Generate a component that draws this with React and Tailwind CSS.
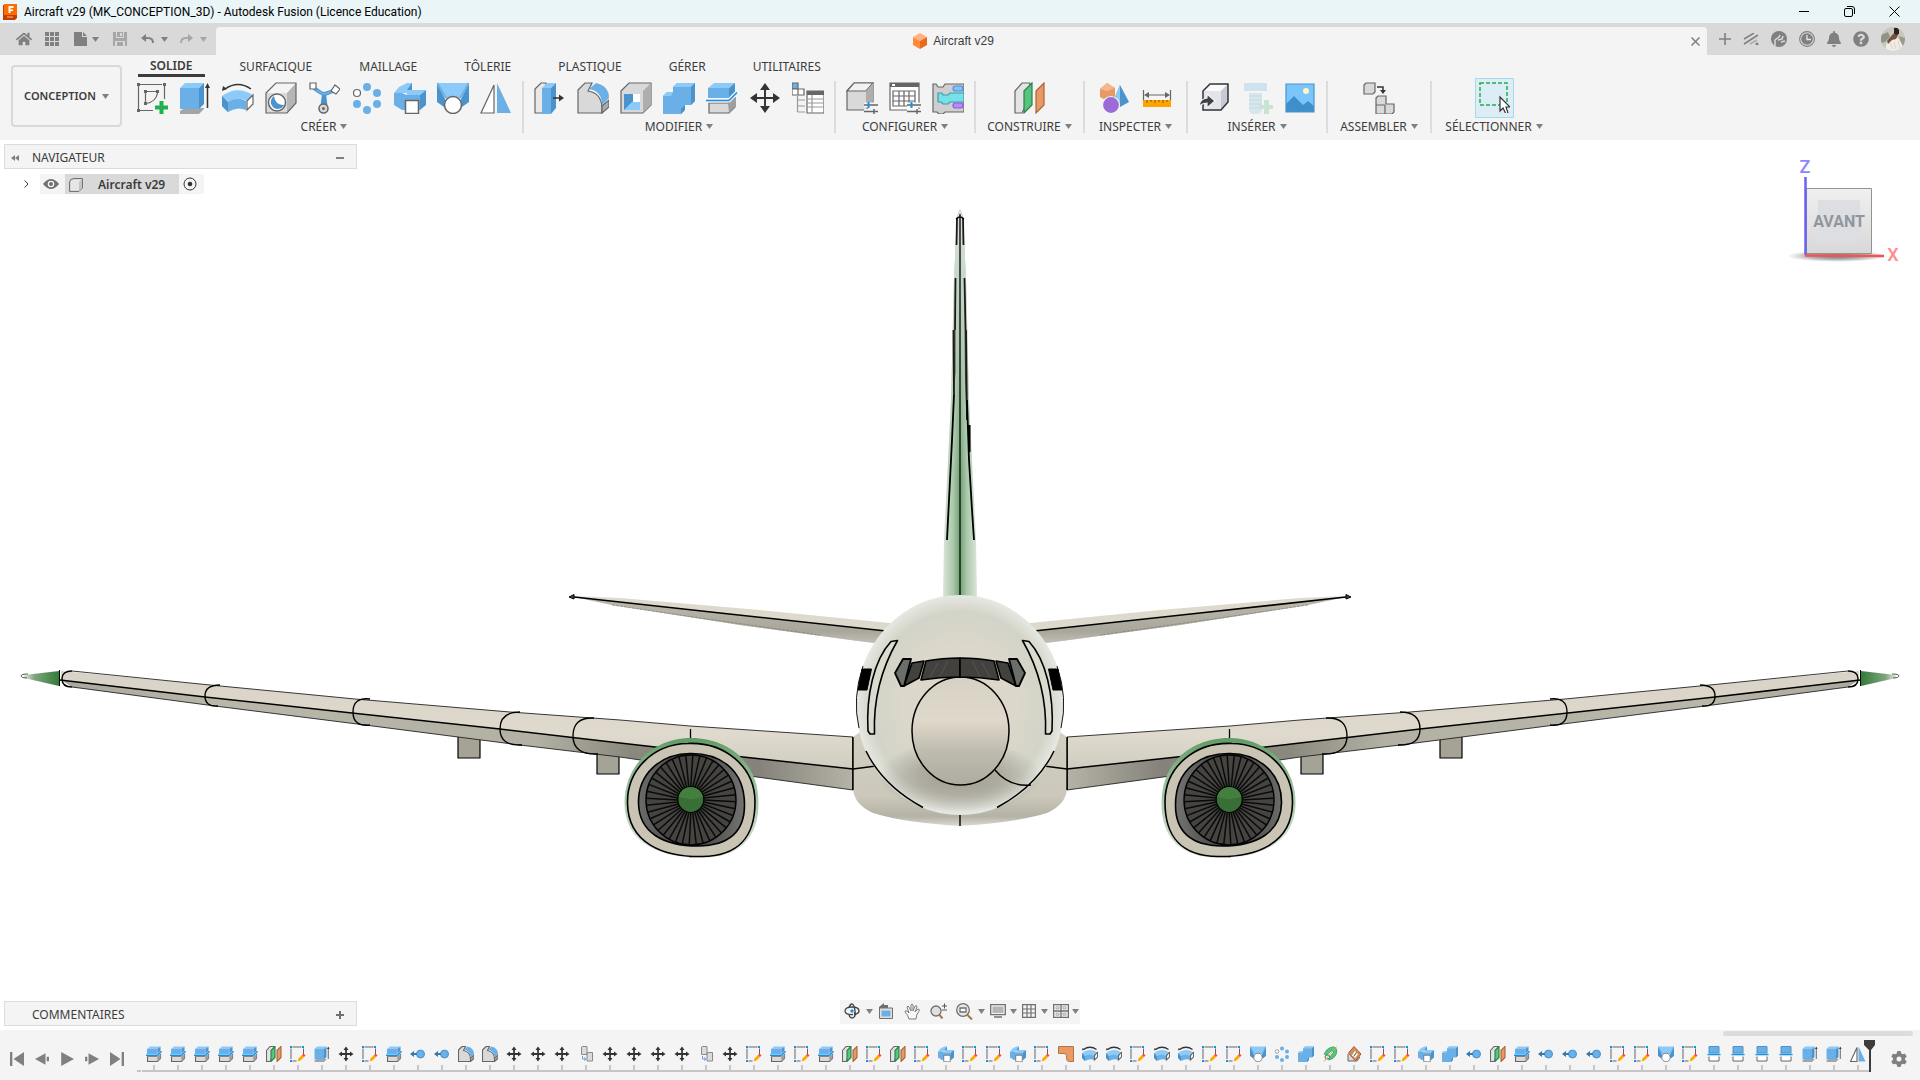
import { FaHome, FaBell, FaQuestionCircle } from "react-icons/fa";
import { FaGear } from "react-icons/fa6";

const LINE = "#666666";
const GREY = "#d9d9d9";
const BLUE = "#6ab0e6";
const SKY = "#8ccaf9";
const DEEP = "#4a93cc";

/* ---------- tool icons, all drawn on a 32 x 32 grid ---------- */

const glyphs = {
  newSketch: () => (
    <>
      <path d="M4 2.500h22M2.500 4v24M28.500 4v13M4 28.500h13" stroke={LINE} fill="none" />
      <path d="M10 9.500h10M9.500 10v10M10 21.500Q20 20 21.500 11" stroke={LINE} fill="none" />
      <path d="M1 1h3v3H1zM27 1h3v3h-3zM1 27h3v3H1zM8 8h3v3H8zM20 8h3v3h-3zM8 20h3v3H8z" fill={LINE} />
      <path d="M23.500 19h4v4.500H32v4h-4.500V32h-4v-4.500H19v-4h4.500z" fill="#21b04f" />
    </>
  ),
  extrude: () => (
    <>
      <path d="M1 29l5-3h19v1l-5 5H1z" fill="#a5a5a5" />
      <path d="M1 6l5-5h19l-5 5z" fill={SKY} />
      <path d="M1 6h19v21H1z" fill={BLUE} />
      <path d="M20 6l5-5v21l-5 5z" fill={DEEP} />
      <path d="M28.500 4v22" stroke="#333" strokeWidth="1.500" />
      <path d="M26 6l2.500-5L31 6z" fill="#333" />
    </>
  ),
  bend: ({ sw }) => (
    <>
      <path d="M3 7Q16-2 29 7" stroke="#333" strokeWidth={sw * 1.2} fill="none" />
      <path d="M0 9l1-5 4 3z" fill="#333" />
      <path d="M0 14Q15 3 31 13l-6 6Q15 14 7 20z" fill={SKY} />
      <path d="M0 14l6 6Q15 14 24 19v9Q15 24 6 30L0 24z" fill={BLUE} />
      <path d="M0 14l6 6v10l-6-6z" fill={DEEP} />
      <path d="M25 19l6-6v9l-6 6z" fill="#fff" stroke={LINE} strokeWidth={sw} />
    </>
  ),
  hole: () => (
    <>
      <path d="M1 11L11 1h20L22 11z" fill="#f4f4f4" />
      <path d="M22 11l9-10v20L22 31z" fill="#b5b5b5" />
      <path d="M1 11h21v20H1z" fill={GREY} />
      <path d="M1 11L11 1h20v20L22 31H1z" fill="none" stroke={LINE} />
      <circle cx="12" cy="20.500" r="8.500" fill="#fff" stroke={LINE} strokeWidth="1.500" />
      <path d="M9 14a7 7 0 1 0 10 9Q10 23 9 14z" fill={DEEP} />
    </>
  ),
  form: () => (
    <>
      <path d="M6 6Q14 12 16 12T27 8M16 12L14 28M16 12L18 28" stroke={DEEP} strokeWidth="4" fill="none" />
      <path d="M6 6Q14 12 16 12T27 8" stroke={BLUE} strokeWidth="2" fill="none" />
      <circle cx="15.500" cy="26.500" r="4.500" fill={GREY} stroke={LINE} strokeWidth="1.500" />
      <circle cx="15.500" cy="26.500" r="1.500" fill={LINE} />
      <path d="M2 1h6v6H2zM27 3l5 4-4 5-5-3z" fill="#fff" stroke={LINE} />
    </>
  ),
  pattern: () => (
    <>
      <circle cx="16" cy="5" r="4" fill={BLUE} />
      <circle cx="26" cy="11" r="4" fill={BLUE} />
      <circle cx="26" cy="22" r="4" fill={BLUE} />
      <circle cx="16" cy="28" r="4" fill={BLUE} />
      <circle cx="6" cy="22" r="4" fill={BLUE} />
      <circle cx="6" cy="11" r="3.500" fill="#fff" stroke={LINE} />
    </>
  ),
  combine: () => (
    <>
      <path d="M0 11L5 5l8-4h5v7h14l-6 5H13v-2z" fill={SKY} />
      <path d="M0 11h8l5 2h13v15H8L0 23z" fill={BLUE} />
      <path d="M13 8l5-7v7zM26 13l6-5v15l-6 5z" fill={DEEP} />
      <path d="M11.500 18.500h13v13h-13z" fill="#fff" stroke={LINE} strokeWidth="1.500" />
    </>
  ),
  loft: () => (
    <>
      <path d="M0 1h32L23 16H9z" fill={SKY} />
      <path d="M0 1l9 18-2 6-7-5z" fill={DEEP} />
      <path d="M32 1l-9 18 2 6 7-5z" fill={DEEP} />
      <path d="M0 1l9 15M32 1l-9 15" stroke={BLUE} strokeWidth="2" />
      <circle cx="16" cy="23" r="8.500" fill="#fff" stroke={LINE} strokeWidth="1.500" />
    </>
  ),
  mirror: ({ sw }) => (
    <>
      <path d="M14 3v28H1z" fill="#fff" stroke={LINE} strokeWidth={sw} />
      <path d="M17 1l14 30H17z" fill={BLUE} />
    </>
  ),
  press: () => (
    <>
      <path d="M1 7l6-6h5v30H1z" fill="#e8e8e8" stroke={LINE} />
      <path d="M8 6l5-5h9l-5 5z" fill={SKY} />
      <path d="M8 6h9v26H8z" fill={BLUE} />
      <path d="M17 6l5-5v25l-5 6z" fill={DEEP} />
      <path d="M19 16h7" stroke="#333" strokeWidth="1.500" />
      <path d="M25 12.500l5 3.500-5 3.500z" fill="#333" />
    </>
  ),
  fillet: ({ sw }) => (
    <>
      <path d="M1 8l7-7h7l-4 8Q24 11 25 25v6H1z" fill={GREY} stroke={LINE} strokeWidth={sw} />
      <path d="M25 24l7-6v7l-7 6z" fill="#aaa" stroke={LINE} strokeWidth={sw} />
      <path d="M12 7l7-6Q32 4 32 16l-7 7Q25 9 12 7z" fill={BLUE} />
    </>
  ),
  shell: () => (
    <>
      <path d="M1 9l8-8h22v22l-8 8H1z" fill={GREY} stroke={LINE} />
      <path d="M23 9l8-8v22l-8 8z" fill="#aeaeae" />
      <path d="M4 12h16v16H4z" fill="#fff" />
      <path d="M4 12h9v8l-7 8H4z" fill={DEEP} />
      <path d="M12 20h8v8H4z" fill={SKY} />
    </>
  ),
  join: () => (
    <>
      <path d="M0 14l4-4h6V5l4-4h18v18l-4 4h-6v5l-4 4H0z" fill={BLUE} />
      <path d="M0 14l4-4h6l-2 4zM10 5l4-4h18l-4 4z" fill={SKY} />
      <path d="M28 5l4-4v18l-4 4zM18 27l4-4v5l-4 4z" fill={DEEP} />
    </>
  ),
  split: ({ sw }) => (
    <>
      <path d="M3 21h19l7-5v9l-6 6H3z" fill={GREY} stroke={LINE} strokeWidth={sw} />
      <path d="M22 21l7-5v9l-6 6z" fill="#9f9f9f" />
      <path d="M2 6l6-5h21l-6 5z" fill={SKY} />
      <path d="M2 6h21v10H2z" fill={BLUE} />
      <path d="M23 6l6-5v9l-6 6z" fill={DEEP} />
      <path d="M0 18.500h23l8-8" fill="none" stroke="#f4f4f4" strokeWidth="4" />
      <path d="M0 18.500h23l8-8" fill="none" stroke="#168fe6" strokeWidth={sw * 1.3} />
    </>
  ),
  move: ({ sw }) => (
    <>
      <path d="M16 5v22M5 16h22" stroke="#333" strokeWidth={sw * 1.6} />
      <path d="M11 8l5-7 5 7zM11 24l5 7 5-7zM8 11l-7 5 7 5zM24 11l7 5-7 5z" fill="#333" />
    </>
  ),
  params: () => (
    <>
      <path d="M0 1h6v6H0z" fill={BLUE} stroke={LINE} />
      <path d="M0 7h6v6H0zM6 7h6v6H6z" fill="#fff" stroke={LINE} />
      <path d="M5.500 14v16M5.500 18H13M5.500 24H13M5.500 30H13" stroke="#999" />
      <path d="M15 9h17v22H15z" fill="#fff" stroke={LINE} />
      <path d="M15 9h17v4H15z" fill={LINE} />
      <path d="M15 17h17M15 21h17M15 25h17M20 13v18" stroke="#999" />
    </>
  ),
  config: () => (
    <>
      <path d="M1 9l7-8h19v19l-7 8H1z" fill={GREY} stroke={LINE} />
      <path d="M1 9l7-8h19l-7 8z" fill="#f2f2f2" stroke={LINE} />
      <path d="M20 9l7-8v19l-7 8z" fill="#aeaeae" />
      <path d="M18 23h14M18 29.500h14" stroke="#f4f4f4" strokeWidth="5" />
      <path d="M18 23h14M18 29.500h14M28 27v5" stroke={LINE} strokeWidth="1.500" />
      <path d="M22.500 20v6" stroke="#168fe6" strokeWidth="2" />
    </>
  ),
  configTable: () => (
    <>
      <path d="M1 1h29v27H1z" fill="#fff" stroke={LINE} />
      <path d="M1 1h29v4H1z" fill={LINE} />
      <path d="M3 2h3v2H3z" fill="#fff" />
      <path d="M4 9h22v15H4zM4 14h22M4 19h22M10 9v15M15 9v15M20 9v15" fill="none" stroke={LINE} />
      <path d="M18 23h14M18 29.500h14" stroke="#f4f4f4" strokeWidth="5" />
      <path d="M18 23h14M18 29.500h14M28 27v5" stroke={LINE} strokeWidth="1.500" />
      <path d="M22.500 20v6" stroke="#168fe6" strokeWidth="2" />
    </>
  ),
  configRule: () => (
    <>
      <path d="M1 2h3l2 3h5l2-3h19v28H13l-2 2H7l-2-2H1z" fill="#cfcfcf" stroke={LINE} />
      <path d="M6 11h4l1 2h5l2-2h14v9H18l-2 2h-5l-2-2H6z" fill="#78e0ea" stroke="#3a9fa8" />
      <rect x="21" y="4" width="10" height="5" rx="2.500" fill="#7cc3ff" stroke="#4a93cc" />
      <rect x="21" y="21" width="10" height="5" rx="2.500" fill="#b98aff" stroke="#8a5fd0" />
    </>
  ),
  plane: ({ sw }) => (
    <>
      <path d="M1 9l7-8h8v14l-8 16H1z" fill="#e4e4e4" stroke={LINE} strokeWidth={sw} />
      <path d="M10 9l8-8v22l-8 8z" fill="#56c57c" stroke="#2e7f4c" strokeWidth={sw} />
      <path d="M22 9l8-8v22l-8 8z" fill="#e79a66" stroke="#a9653a" strokeWidth={sw} />
    </>
  ),
  inspect: () => (
    <>
      <path d="M2 7l7-6 8 5v9l-8 4-7-4z" fill="#e79a66" />
      <path d="M2 7l7-6 8 5-8 3z" fill="#f6b78d" />
      <path d="M22 3l9 17-9 5-7-5z" fill={DEEP} />
      <path d="M22 3v22l-7-5z" fill={SKY} />
      <circle cx="13" cy="23" r="8.500" fill="#9b6bd8" stroke="#f4f4f4" />
    </>
  ),
  measure: () => (
    <>
      <path d="M2.500 8v12M29.500 8v12M5 13h22" stroke={LINE} />
      <path d="M3 13l5-3v6zM29 13l-5-3v6z" fill={LINE} />
      <path d="M2 18h28v7H2z" fill="#ffa500" />
      <path d="M6 18v3M10 18v2M14 18v3M18 18v2M22 18v3M26 18v2" stroke="#9a6100" />
    </>
  ),
  insert: () => (
    <>
      <path d="M5 9l7-7h18v18l-7 8H5z" fill="#e3e3e9" />
      <path d="M5 9l7-7h18l-7 7z" fill="#fafafa" />
      <path d="M23 9l7-7v18l-7 8z" fill="#c6cad4" />
      <path d="M5 9l7-7h18v18l-7 8H5z" fill="none" stroke="#333" strokeWidth="1.500" />
      <path d="M1 24Q2 17 9 16v-4l8 7-8 7v-5q-4 0-8 3z" fill="#3d4148" stroke="#f4f4f4" />
    </>
  ),
  bolt: () => (
    <g opacity="0.800">
      <path d="M3 1h23v8H3z" fill="#c6e0ef" />
      <path d="M8 11h13v18l-3 3h-7l-3-3z" fill="#d2e4ee" />
      <path d="M8 14h13M8 18h13M8 22h13M8 26h13" stroke="#b5cfdc" />
      <path d="M23 18h5v5h5v4h-5v5h-5v-5h-5v-4h5z" fill="#bfe2ca" />
    </g>
  ),
  image: () => (
    <>
      <path d="M2 2h28v28H2z" fill="#7cc5fb" />
      <path d="M2 22l8-8 9 9 5-4 6 5v6H2z" fill="#3d90cb" />
      <path d="M2 2h28v28H2z" fill="none" stroke={DEEP} />
      <circle cx="22" cy="9" r="3" fill="#fff6c8" />
    </>
  ),
  assemble: () => (
    <>
      <path d="M1 3l2-2h9v9l-2 2H1zM13 16l2-2h8v8h8v8l-2 2H13zM13 23h9M22 32v-9" fill={GREY} stroke={LINE} />
      <path d="M14 5h6v4" stroke="#333" strokeWidth="1.500" fill="none" />
      <path d="M17 8h6l-3 4z" fill="#333" />
    </>
  ),
  select: () => (
    <>
      <path d="M2 2h27v22H2z" fill="none" stroke="#21b04f" strokeWidth="1.500" strokeDasharray="4 2" />
      <path d="M22 16v14l3-3 3 6 2-1-2-6h4z" fill="#fff" stroke="#333" strokeWidth="1.200" />
    </>
  ),
  sketch: () => (
    <>
      <path d="M5 2h18M2 5v21M27 5v13M5 30h8" stroke={LINE} strokeWidth="2" fill="none" />
      <path d="M0 0h4v4H0zM24 0h4v4h-4zM0 28h4v4H0z" fill="#168fe6" />
      <path d="M15 31l2-6 7-7 4 4-7 7z" fill="#ffa800" />
      <path d="M24 18l3-3 4 4-3 3z" fill="#ff3f3f" />
    </>
  ),
  point: () => (
    <>
      <circle cx="21" cy="16" r="8" fill={BLUE} stroke={DEEP} strokeWidth="2" />
      <path d="M0 16l8-6v12z" fill="#3778a8" />
      <path d="M6 16h8" stroke="#3778a8" strokeWidth="4" />
    </>
  ),
  copy: () => (
    <>
      <path d="M7 2l2-1h9v16h-2H7zM18 14l2-1h9v17H18z" fill="#dcdcdc" stroke="#8a8a8a" strokeWidth="2" />
      <path d="M9 20v6h6M12 23l4 3-4 3" stroke="#6f9fe0" strokeWidth="2" fill="none" />
    </>
  ),
  flange: () => <path d="M1 1h30v30h-8q-6 0-6-6v-6q0-4-5-4H1z" fill="#e79a66" stroke="#b9713f" strokeWidth="2" />,
  coil: () => (
    <>
      <path d="M7 18Q12 7 22 5q7 2 3 11-5 8-12 9" fill="none" stroke="#2e9a5a" strokeWidth="8" />
      <path d="M7 18Q12 7 22 5q7 2 3 11-5 8-12 9" fill="none" stroke="#56c57c" strokeWidth="6" />
      <ellipse cx="11" cy="22" rx="5" ry="4" fill="#f4f4f4" stroke="#2e7f4c" strokeWidth="2" />
      <path d="M4 31L29 1" stroke="#e79a66" strokeWidth="2" />
    </>
  ),
  decal: () => (
    <>
      <path d="M4 16v14h18L28 22" fill={GREY} stroke={LINE} strokeWidth="2" />
      <path d="M5 14L16 1l14 15-11 14z" fill="#d98a5a" stroke="#9c5f38" strokeWidth="2" />
      <path d="M13 20l6-9M17 23l6-8" stroke="#fff" strokeWidth="3" />
      <path d="M16 20l5-7" stroke="#2e9a5a" strokeWidth="2" />
    </>
  ),
  cut: () => (
    <>
      <path d="M6 1h20v13H6z" fill={BLUE} stroke={DEEP} strokeWidth="2" />
      <path d="M3 17h26" stroke="#168fe6" strokeWidth="3" />
      <path d="M6 21v9h20v-9" fill="#fff" stroke={LINE} strokeWidth="2" />
    </>
  ),
};

function ToolIcon({ name, small }) {
  const Glyph = glyphs[name];
  return (
    <svg viewBox="0 0 32 32" className={small ? "size-4" : "size-8"} strokeWidth="1.2" aria-hidden="true">
      <Glyph sw={small ? 2.2 : 1.2} />
    </svg>
  );
}

const Caret = ({ className = "" }) => (
  <svg viewBox="0 0 7 5" className={`h-[5px] w-[7px] shrink-0 ${className}`} aria-hidden="true">
    <path d="M0 0h7L3.500 5z" fill="currentColor" />
  </svg>
);

/* ---------- data ---------- */

const tabs = ["SOLIDE", "SURFACIQUE", "MAILLAGE", "TÔLERIE", "PLASTIQUE", "GÉRER", "UTILITAIRES"];

const groups = [
  {
    label: "CRÉER",
    width: "w-[394px] pr-1",
    tools: ["newSketch", "extrude", "bend", "hole", "form", "pattern", "combine", "loft", "mirror"],
  },
  { label: "MODIFIER", width: "w-[312px]", tools: ["press", "fillet", "shell", "join", "split", "move", "params"] },
  { label: "CONFIGURER", width: "w-[140px]", tools: ["config", "configTable", "configRule"] },
  { label: "CONSTRUIRE", width: "w-[109px]", tools: ["plane"] },
  { label: "INSPECTER", width: "w-[103px]", tools: ["inspect", "measure"] },
  { label: "INSÉRER", width: "w-[140px]", tools: ["insert", "bolt", "image"] },
  { label: "ASSEMBLER", width: "w-[104px]", tools: ["assemble"] },
  { label: "SÉLECTIONNER", width: "w-[126px] pr-0.5", tools: ["select"] },
];

const timeline = (
  "split split split split split plane sketch extrude move sketch split point point fillet fillet " +
  "move move move copy move move move move copy move sketch split sketch split plane sketch plane sketch " +
  "combine sketch sketch combine sketch flange bend bend sketch bend bend sketch sketch loft pattern join " +
  "coil decal sketch sketch combine join point plane split point point point sketch sketch loft sketch " +
  "cut cut cut cut extrude extrude mirror"
).split(" ");

/* ---------- window chrome ---------- */

function TitleBar() {
  return (
    <header className="flex h-[23px] items-center justify-between bg-[#eaf5f8] pl-[3px] pr-5">
      <div className="flex items-center gap-[7px]">
        <svg viewBox="0 0 14 16" className="h-4 w-3.5" aria-hidden="true">
          <path d="M1 1l2-1h11v14l-2 2H0V1z" fill="#c43c00" />
          <path d="M1 0h13v11H1z" fill="#ff6b00" />
          <path d="M5.500 2h5v2h-3v1.500H10v1.500H7.500V9h-2z" fill="#fff" />
          <path d="M4 13h6" stroke="#f0c0a0" />
        </svg>
        <h1 className="font-['Roboto',sans-serif] text-[12px] leading-4 text-black">
          Aircraft v29 (MK_CONCEPTION_3D) - Autodesk Fusion (Licence Education)
        </h1>
      </div>
      <div className="flex items-center gap-[34px]">
        <button aria-label="Réduire">
          <svg viewBox="0 0 11 11" className="size-[11px]">
            <path d="M0 5.500h10" stroke="#000" />
          </svg>
        </button>
        <button aria-label="Restaurer">
          <svg viewBox="0 0 11 11" className="size-[11px]" fill="none" stroke="#000">
            <rect x="0.500" y="2.500" width="8" height="8" rx="1.500" />
            <path d="M3 .5h5q2.500 0 2.500 2.500v5" />
          </svg>
        </button>
        <button aria-label="Fermer">
          <svg viewBox="0 0 11 11" className="size-[11px]">
            <path d="M.5.5l10 10M10.500.5l-10 10" stroke="#000" />
          </svg>
        </button>
      </div>
    </header>
  );
}

function QuickBar() {
  return (
    <div className="flex h-8 items-end bg-[#d9d9d9] text-[#808080]">
      <div className="flex h-8 w-[216px] items-center pl-4 pr-2">
        <button aria-label="Accueil"><FaHome className="size-4" /></button>
        <button aria-label="Panneau de données" className="ml-[13px]">
          <svg viewBox="0 0 14 14" className="size-3.5" fill="currentColor">
            <path d="M0 0h4v4H0zM5 0h4v4H5zM10 0h4v4h-4zM0 5h4v4H0zM5 5h4v4H5zM10 5h4v4h-4zM0 10h4v4H0zM5 10h4v4H5zM10 10h4v4h-4z" />
          </svg>
        </button>
        <button aria-label="Fichier" className="ml-[15px] flex items-center gap-1">
          <svg viewBox="0 0 14 14" className="size-3.5" fill="currentColor">
            <path d="M0 0h8v5h5v9H0zM9 0l4 4H9z" />
          </svg>
          <Caret />
        </button>
        <button aria-label="Enregistrer" className="ml-3.5 text-[#a6a6a6]">
          <svg viewBox="0 0 14 14" className="size-3.5" fill="currentColor">
            <path fillRule="evenodd" d="M0 0h3v6h8V0h3v14h-2v-5H2v5H0zM4 0h6v5H4zM4 10h6v4H4zM7 1h2v3H7z" />
          </svg>
        </button>
        <button aria-label="Annuler" className="ml-3.5 flex items-center gap-[7px]">
          <svg viewBox="0 0 13 10" className="h-2.5 w-[13px]">
            <path d="M4 4h3q5 0 5 5" fill="none" stroke="currentColor" strokeWidth="2" />
            <path d="M0 4l5-4v8z" fill="currentColor" />
          </svg>
          <Caret />
        </button>
        <button aria-label="Rétablir" className="ml-3 flex items-center gap-[7px] text-[#a6a6a6]">
          <svg viewBox="0 0 13 10" className="h-2.5 w-[13px]">
            <path d="M9 4H6q-5 0-5 5" fill="none" stroke="currentColor" strokeWidth="2" />
            <path d="M13 4L8 0v8z" fill="currentColor" />
          </svg>
          <Caret />
        </button>
      </div>
      <div className="flex h-7 flex-1 items-center rounded-t-[4px] bg-[#f4f4f4] pr-[7px]">
        <div className="flex flex-1 items-center justify-center gap-[6px]">
          <svg viewBox="0 0 14 16" className="h-4 w-3.5" aria-hidden="true">
            <path d="M0 4l7-4 7 4-7 4z" fill="#ffb27d" />
            <path d="M0 4l7 4v8l-7-4z" fill="#ff8a3d" />
            <path d="M14 4L7 8v8l7-4z" fill="#e8691b" />
          </svg>
          <span className="font-['Liberation_Sans',sans-serif] text-[12px] leading-4 text-[#3c3c3c]">Aircraft v29</span>
        </div>
        <button aria-label="Fermer l'onglet">
          <svg viewBox="0 0 9 9" className="size-[9px]">
            <path d="M.5.5l8 8M8.500.5l-8 8" stroke="currentColor" strokeWidth="1.500" />
          </svg>
        </button>
      </div>
      <div className="flex h-8 items-center gap-3 pl-3 pr-[15px]">
        <button aria-label="Nouvel onglet">
          <svg viewBox="0 0 12 12" className="size-3">
            <path d="M6 0v12M0 6h12" stroke="currentColor" strokeWidth="1.600" />
          </svg>
        </button>
        <button aria-label="Extensions">
          <svg viewBox="0 0 16 12" className="h-3 w-4" stroke="currentColor" strokeWidth="1.500">
            <path d="M1 6L11 0M1 11L15 2" />
            <path d="M7 11l7-4" opacity="0.500" />
            <circle cx="14" cy="11" r=".8" />
          </svg>
        </button>
        <button aria-label="Formation">
          <svg viewBox="0 0 16 16" className="size-4">
            <circle cx="8" cy="8" r="8" fill="currentColor" />
            <path d="M4 15V9l4-3 1-2M7 9l4-1 1-3M10 11l4-1" stroke="#d9d9d9" strokeWidth="1.500" fill="none" />
          </svg>
        </button>
        <button aria-label="État des travaux">
          <svg viewBox="0 0 16 16" className="size-4">
            <circle cx="8" cy="8" r="7.400" fill="none" stroke="currentColor" strokeWidth="1.100" />
            <circle cx="8" cy="8" r="5.800" fill="currentColor" />
            <path d="M8 4v4.500h4" stroke="#e6e6e6" strokeWidth="1.300" fill="none" />
          </svg>
        </button>
        <button aria-label="Notifications"><FaBell className="h-4 w-3.5" /></button>
        <button aria-label="Aide"><FaQuestionCircle className="size-4" /></button>
        <button aria-label="Profil">
          <svg viewBox="0 0 24 24" className="size-6 rounded-full">
            <path d="M0 0h24v24H0z" fill="#c9c7bd" />
            <path d="M0 8l7-3 2 5-5 5-4 1z" fill="#8f9288" />
            <path d="M18 9l6 2v9l-4-3z" fill="#9a9a8c" />
            <path d="M6 14q5-4 11-3l4 6 1 7H4z" fill="#f1ede6" />
            <path d="M12 7l3-2 2 3-2 4-4 1-4 4-1-3z" fill="#75523f" />
            <path d="M13 1q4-1 5 2v4l-3 1-2-2z" fill="#2b211d" />
            <path d="M9 16l3 6M13 15l2 7M17 14l2 7" stroke="#cbc3b8" strokeWidth="0.600" />
          </svg>
        </button>
      </div>
    </div>
  );
}

function Ribbon() {
  return (
    <div className="flex h-[85px] bg-[#f4f4f4] text-[#3c3c3c]">
      <button className="ml-[11px] mt-[10px] flex h-[62px] w-[111px] items-center justify-center gap-[6px] rounded-[4px] border-2 border-[#d9d9d9] text-[11px] font-semibold">
        CONCEPTION
        <Caret className="text-[#808080]" />
      </button>
      <div className="flex-1 pl-2">
        <nav className="flex h-[22px] items-start gap-[23px] pl-2">
          {tabs.map((tab, i) => (
            <button
              key={tab}
              className={`h-[22px] px-3 pt-[3px] pb-px text-[12px] leading-4 ${
                i === 0 ? "border-b-[3px] border-[#3c3c3c] font-semibold" : ""
              }`}
            >
              {tab}
            </button>
          ))}
        </nav>
        <div className="flex pt-1">
          {groups.map((group, i) => (
            <div
              key={group.label}
              className={`flex h-[52px] flex-col items-center justify-between ${group.width} ${
                i < groups.length - 1 ? "border-r-2 border-[#dcdcdc]" : ""
              }`}
            >
              <div className="flex h-8 gap-[11px]">
                {group.tools.map((tool) => (
                  <button
                    key={tool}
                    aria-label={tool}
                    className={
                      tool === "select"
                        ? "-mt-[3px] flex h-10 w-[39px] justify-center border border-[#a8d8ee] bg-[#dcedf6] pt-0.5"
                        : "mt-px size-8"
                    }
                  >
                    <ToolIcon name={tool} />
                  </button>
                ))}
              </div>
              <button className="flex items-center gap-1 text-[12px] leading-[13px]">
                {group.label}
                <Caret className="text-[#808080]" />
              </button>
            </div>
          ))}
        </div>
      </div>
    </div>
  );
}

/* ---------- aircraft model ---------- */

const blades = Array.from({ length: 40 }, (_, i) => {
  const a = (i / 40) * Math.PI * 2;
  return [690.8 + 13 * Math.cos(a), 800 + 13 * Math.sin(a), 691 + 45 * Math.cos(a + 0.04), 800 + 45 * Math.sin(a + 0.04)];
});

// Port half of the airframe; the starboard half is its mirror image.
function HalfAircraft() {
  return (
    <g strokeLinejoin="round">
      {/* stabiliser */}
      <path d="M572 596L620 598 760 610 900 624V646L858 641 740 625 612 605z" fill="#ded9cd" />
      <path d="M574 597L720 613 900 633V646L858 641 740 625 612 605z" fill="url(#stab)" />
      <path d="M612 605L700 618 820 635" fill="none" stroke="#77756c" strokeWidth="0.600" strokeDasharray="3 1" />
      <path d="M574 597L720 613 886 631" fill="none" stroke="#000" strokeWidth="1.600" />
      <path d="M569 597l5-2.500v4.500z" fill="#23602c" stroke="#000" />

      {/* flap fairings */}
      <path d="M458 736v22h22v-20zM597 752v22h22v-19z" fill="#a5a296" stroke="#000" strokeWidth="1.200" />

      {/* wing */}
      <path d="M61 671L210 685 355 699 510 712 620 720 690 726 853 737V769L743 757 620 743 500 729 352 713 205 697 61 680z" fill="url(#wingTop)" />
      <path d="M61 680L205 697 352 713 500 729 620 743 743 757 853 769V790L757 777 620 757 520 745 365 725 215 706 72 687z" fill="url(#wingLow)" />
      <path d="M72 671L210 685 355 699 510 712 620 720 690 726 853 737M72 687L215 706 365 725 520 745 620 757 757 777 853 790" fill="none" stroke="#222" strokeWidth="0.900" />
      <path d="M60 680L205 697 352 713 500 729 620 743 743 757 853 769M853 737V790" fill="none" stroke="#000" strokeWidth="1.500" />
      <path
        d="M72 671Q62 671 62 679T72 687M220 685Q205 685 205 696T218 706M370 699Q353 697 353 712T370 725M520 712Q500 712 500 729T522 745M594 718Q573 717 573 736T598 754"
        fill="none"
        stroke="#000"
        strokeWidth="1.400"
      />
      <path d="M24 675L59 671V686L24 678z" fill="url(#tip)" />
      <path d="M59.500 670V686" stroke="#000" />
      <path d="M28 674q-7 0-7 2t6 2" fill="none" stroke="#555" />

      {/* belly fairing */}
      <path d="M853 737L866 728H962V826Q905 823 873 813 853 804 853 787z" fill="url(#belly)" />
      <path d="M853 769l23-3" stroke="#000" strokeWidth="1.400" />
      <path d="M853 737V790" stroke="#000" strokeWidth="1.400" />
    </g>
  );
}

function Engine() {
  return (
    <g>
      <path d="M684 739q0-9 6-10 7 1 7 10z" fill="#dcdcd2" />
      <path d="M690.500 729v12M690.500 854v4" stroke="#000" strokeWidth="1.300" />
      <path d="M691 738C728 738 758.500 762 758.500 803 758.500 838 740 858 700 858 660 858 624.500 843 624.500 803 624.500 765 654 738 691 738z" fill="url(#cowl)" />
      <path
        d="M688 743.500C724 742 755 766 755 802 755 836 740 856 702 856.500 664 857 628 844 627.500 803 627 770 653 744 688 743.500z"
        fill="#c9c4b4"
        stroke="#000"
        strokeWidth="1.600"
      />
      <path
        d="M690 753.500C718 753 744.500 768 744.500 805 744.500 832 729 845.500 698 846 664 846 639 833 638.500 803 638 774 660 754 690 753.500z"
        fill="url(#duct)"
        stroke="#000"
        strokeWidth="1.600"
      />
      <circle cx="691" cy="800" r="45" fill="#454441" stroke="#000" strokeWidth="1.400" />
      {blades.map(([x1, y1, x2, y2], i) => (
        <line key={i} x1={x1} y1={y1} x2={x2} y2={y2} stroke="#0a0a0a" strokeWidth="1.500" />
      ))}
      <circle cx="690.800" cy="799.500" r="13" fill="#376f35" stroke="#000" strokeWidth="1.200" />
      <path d="M678.500 797a12.500 12.500 0 0 1 24.500 0L691 799.500z" fill="#43803f" />
    </g>
  );
}

function NoseSide() {
  return (
    <g stroke="#000" strokeLinejoin="round">
      <path d="M862 669h9.500L867 690h-9z" fill="#000" />
      <path d="M891 641.500C874 660 866 695 868 731l2 3h4.500q-2-50 23-93.500z" fill="#dcdbd0" strokeWidth="1.600" />
      <path d="M926 661Q942 658 960 658V677Q940 677 921 680z" fill="#42413d" strokeWidth="1.600" />
      <path d="M930 677l8-14M940 676l8-15" stroke="#5c5a55" strokeWidth="0.800" />
      <path d="M912 663l12-2-5 17-15 8z" fill="#42413d" strokeWidth="1.600" />
      <path d="M903 659h8l-7 27h-3l-6-13z" fill="#6a6e69" strokeWidth="1.800" />
      <path d="M866 751Q883 786 923 807.500" fill="none" strokeWidth="1.500" />
      <path d="M863 666Q852 698 859 728" fill="none" strokeWidth="0.900" />
    </g>
  );
}

function Aircraft() {
  return (
    <svg viewBox="0 140 1920 890" className="h-full w-full" role="img" aria-label="Aircraft">
      <defs>
        <linearGradient id="wingTop" x1="0" y1="0" x2="0" y2="1">
          <stop offset="0" stopColor="#d8d3c6" />
          <stop offset="0.650" stopColor="#e0dace" />
          <stop offset="1" stopColor="#cfccbf" />
        </linearGradient>
        <linearGradient id="wingLow" x1="0" y1="0" x2="1" y2="0">
          <stop offset="0" stopColor="#aaa89d" />
          <stop offset="0.200" stopColor="#b9b6aa" />
          <stop offset="0.600" stopColor="#b3b0a4" />
          <stop offset="0.720" stopColor="#8b887e" />
          <stop offset="0.880" stopColor="#85827b" />
          <stop offset="1" stopColor="#b5b2a6" />
        </linearGradient>
        <linearGradient id="stab" x1="0" y1="0" x2="0" y2="1">
          <stop offset="0" stopColor="#bcb9ad" />
          <stop offset="0.700" stopColor="#a9a79c" />
          <stop offset="1" stopColor="#c6c5bc" />
        </linearGradient>
        <linearGradient id="belly" x1="0" y1="0" x2="0" y2="1">
          <stop offset="0" stopColor="#d3d0c2" />
          <stop offset="0.700" stopColor="#cbc8bb" />
          <stop offset="0.900" stopColor="#b4b1a5" />
          <stop offset="1" stopColor="#dadbd2" />
        </linearGradient>
        <linearGradient id="tip" x1="0" y1="0" x2="1" y2="0">
          <stop offset="0" stopColor="#e6ebe2" />
          <stop offset="0.300" stopColor="#7ea57d" />
          <stop offset="1" stopColor="#357a39" />
        </linearGradient>
        <linearGradient id="fin" x1="0" y1="0" x2="1" y2="0">
          <stop offset="0" stopColor="#dbe5da" />
          <stop offset="0.300" stopColor="#a9c8aa" />
          <stop offset="0.500" stopColor="#6ea271" />
          <stop offset="0.700" stopColor="#a9c8aa" />
          <stop offset="1" stopColor="#dbe5da" />
        </linearGradient>
        <linearGradient id="finTop" x1="0" y1="0" x2="0" y2="1">
          <stop offset="0" stopColor="#dde4dc" />
          <stop offset="0.300" stopColor="#cfdccf" stopOpacity="0.700" />
          <stop offset="0.700" stopColor="#cfdccf" stopOpacity="0" />
        </linearGradient>
        <linearGradient id="cowl" x1="0" y1="0" x2="0" y2="1">
          <stop offset="0" stopColor="#5f9c62" />
          <stop offset="0.400" stopColor="#9bc09d" />
          <stop offset="1" stopColor="#e3e9e0" />
        </linearGradient>
        <linearGradient id="duct" x1="0" y1="0" x2="1" y2="0">
          <stop offset="0" stopColor="#6b6b69" />
          <stop offset="0.500" stopColor="#3e3e3c" />
          <stop offset="1" stopColor="#737371" />
        </linearGradient>
        <radialGradient id="hull" cx="0.500" cy="0.500" r="0.500">
          <stop offset="0" stopColor="#e0d7ca" />
          <stop offset="0.550" stopColor="#dbd7ca" />
          <stop offset="0.850" stopColor="#d3d4c9" />
          <stop offset="1" stopColor="#e6e9e2" />
        </radialGradient>
        <radialGradient id="chin" cx="0.500" cy="0.500" r="0.500">
          <stop offset="0" stopColor="#9c998e" />
          <stop offset="0.500" stopColor="#a5a297" stopOpacity="0.800" />
          <stop offset="1" stopColor="#a19e92" stopOpacity="0" />
        </radialGradient>
        <linearGradient id="nose" x1="0" y1="0" x2="0" y2="1">
          <stop offset="0" stopColor="#d5d1c4" />
          <stop offset="0.400" stopColor="#e0d9cb" />
          <stop offset="0.700" stopColor="#bdbaae" />
          <stop offset="1" stopColor="#aeaba0" />
        </linearGradient>
      </defs>

      {/* fin */}
      <path d="M960 209l3 8 3 61 3 122 4 80 3 60 1 57H943l1-57 3-60 4-80 3-122 3-61z" fill="url(#fin)" />
      <path d="M960 209l3 8 3 61 3 122 4 80 3 60 1 57H943l1-57 3-60 4-80 3-122 3-61z" fill="url(#finTop)" />
      <path d="M955.500 330H953.500V400L955.500 372zM964.500 330H966.500V420L965 380z" fill="#4a4945" />
      <path
        d="M957 218L956.500 245M963 218L963.500 245M955.500 278L955 330M953.500 330L954 395M964.500 278L965.500 330M966 330L967 420"
        fill="none"
        stroke="#1a1a19"
        strokeWidth="1.800"
      />
      <path d="M954 395L952 440 949 500 947 540M967 400L969 460 972 510 974 540" fill="none" stroke="#000" strokeWidth="1.800" />
      <path d="M967.500 425h3v27h-2z" fill="#000" />
      <path d="M960 214V595M956 219q4-4 8 0" fill="none" stroke="#111" strokeWidth="1.400" />

      <HalfAircraft />
      <g transform="matrix(-1 0 0 1 1920 0)">
        <HalfAircraft />
      </g>
      <Engine />
      <g transform="matrix(-1 0 0 1 1920 0)">
        <Engine />
      </g>

      {/* fuselage */}
      <ellipse cx="960" cy="705" rx="104" ry="110" fill="url(#hull)" />
      <ellipse cx="960" cy="776" rx="82" ry="36" fill="url(#chin)" />
      <ellipse cx="960.500" cy="731" rx="48.500" ry="54" fill="url(#nose)" stroke="#000" strokeWidth="1.500" />
      <path d="M995 770q14 17 36 15M960 815v11" fill="none" stroke="#000" strokeWidth="1.400" />
      <NoseSide />
      <g transform="matrix(-1 0 0 1 1920 0)">
        <NoseSide />
      </g>
    </svg>
  );
}

/* ---------- canvas overlays ---------- */

function ViewCube() {
  return (
    <svg viewBox="0 0 130 120" className="absolute right-[10px] top-[10px] h-[120px] w-[130px]" role="img" aria-label="AVANT">
      <defs>
        <linearGradient id="cube" x1="0" y1="0" x2="0" y2="1">
          <stop offset="0" stopColor="#f0f0f0" />
          <stop offset="1" stopColor="#d8d8d8" />
        </linearGradient>
        <radialGradient id="shade">
          <stop offset="0" stopColor="#666" />
          <stop offset="0.600" stopColor="#888" stopOpacity="0.600" />
          <stop offset="1" stopColor="#999" stopOpacity="0" />
        </radialGradient>
      </defs>
      <ellipse cx="57" cy="106" rx="50" ry="6" fill="url(#shade)" />
      <path d="M26.500 38.500h65v65h-65z" fill="url(#cube)" stroke="#8f958f" />
      <path d="M38 50h42v42H38z" fill="#dcdee1" />
      <path d="M25.500 27v78" stroke="#6a62f0" strokeWidth="2.500" />
      <path d="M25 105.500l79 .5" stroke="#f05555" strokeWidth="2.500" />
      <g textAnchor="middle" className="font-['Roboto',sans-serif] font-bold">
        <text x="59" y="77" fontSize="16" fill="#92969c">AVANT</text>
        <text x="25" y="23" fontSize="18" fill="#8c88ff" className="font-medium">Z</text>
        <text x="113" y="111" fontSize="18" fill="#ff8c8c" className="font-medium">X</text>
      </g>
    </svg>
  );
}

function Browser() {
  return (
    <section className="absolute left-1 top-1 w-[353px] text-[12px] leading-4 text-[#3c3c3c]">
      <div className="flex h-[25px] items-center border border-[#dcdcdc] bg-[#f4f4f4] pl-[6px] pr-3 pt-0.5">
        <svg viewBox="0 0 8 6" className="h-1.5 w-2" fill="#808080" aria-hidden="true">
          <path d="M4 0v6L0 3zM8 0v6L4 3z" />
        </svg>
        <h2 className="ml-[13px] flex-1">NAVIGATEUR</h2>
        <button aria-label="Réduire le navigateur" className="h-0.5 w-2 bg-[#808080]" />
      </div>
      <div className="mt-[5px] flex h-5 items-center pl-3">
        <button aria-label="Développer" className="flex w-6 justify-center pr-1">
          <svg viewBox="0 0 5 8" className="h-2 w-[5px]">
            <path d="M.5.5L4 4 .5 7.500" fill="none" stroke="#3c3c3c" />
          </svg>
        </button>
        <button aria-label="Afficher" className="flex h-5 w-[25px] items-center justify-center bg-[#f4f4f4] pr-[3px]">
          <svg viewBox="0 0 16 10" className="h-2.5 w-4">
            <path d="M0 5q8-10 16 0-8 10-16 0z" fill="#707070" />
            <circle cx="8" cy="5" r="3.300" fill="#f4f4f4" />
            <circle cx="8" cy="5" r="2" fill="#707070" />
          </svg>
        </button>
        <button className="flex h-5 items-center gap-[15px] bg-[#d9d9d9] pl-1 pr-3.5 pt-px font-semibold">
          <svg viewBox="0 0 14 14" className="size-3.5" aria-hidden="true">
            <path d="M.6 4Q1 .6 5 .6h8.400V10l-3.400 3.400H.6z" fill="#e6e6e6" stroke="#666" />
            <path d="M10 4l3-3v9l-3 3z" fill="#c4c4c4" />
          </svg>
          Aircraft v29
        </button>
        <button aria-label="Activer" className="flex h-5 w-[25px] items-center justify-center bg-[#f4f4f4] pr-1">
          <svg viewBox="0 0 14 14" className="size-3.5">
            <circle cx="7" cy="7" r="6" fill="none" stroke="#333" />
            <circle cx="7" cy="7" r="2.300" fill="#333" />
          </svg>
        </button>
      </div>
    </section>
  );
}

function Comments() {
  return (
    <section className="absolute bottom-1 left-1 flex h-[25px] w-[353px] items-center border border-[#dcdcdc] bg-[#f4f4f4] pl-[27px] pr-3 pt-0.5 text-[12px] leading-4 text-[#3c3c3c]">
      <h2 className="flex-1">COMMENTAIRES</h2>
      <button aria-label="Développer les commentaires">
        <svg viewBox="0 0 8 8" className="size-2">
          <path d="M4 0v8M0 4h8" stroke="#707070" strokeWidth="2" />
        </svg>
      </button>
    </section>
  );
}

function NavBar() {
  return (
    <div className="absolute bottom-[6px] left-1/2 flex h-6 w-[240px] -translate-x-1/2 items-center gap-[5px] bg-[#f4f4f4] pb-0.5 pl-1 text-[#808080]">
      <button aria-label="Orbite" className="flex items-center gap-[6px]">
        <svg viewBox="0 0 16 16" className="size-4" fill="none" stroke="#444" strokeWidth="1.300">
          <path d="M9 11.500Q1 12 1 8t7-4 7 4q0 2-3 3" />
          <path d="M5 5Q6 1 8 1t3 7-3 7q-2 0-3-3" />
          <path d="M10 9v4l3-2z" fill="#444" stroke="none" />
          <circle cx="8" cy="8" r="1" fill="#168fe6" stroke="#168fe6" />
        </svg>
        <Caret />
      </button>
      <button aria-label="Regarder">
        <svg viewBox="0 0 16 16" className="size-4">
          <path d="M1.500 5h13v10.500h-13z" fill="#e0e0e0" stroke="#707070" />
          <path d="M3.500 7.500h9v6h-9z" fill={BLUE} />
          <path d="M1 4l5-4v2h4v3H1z" fill="#707070" />
        </svg>
      </button>
      <button aria-label="Panoramique" className="ml-[5px]">
        <svg viewBox="0 0 17 17" className="size-[17px]" fill="#f8f8f8" stroke="#707070" strokeWidth="0.900">
          <path d="M5 16Q4 12 1 9q0-2 2-1l2 2-2-6q1-2 2 0l2 4V2q1-2 2 0v6l2-5q2-1 2 1l-2 5 3-3q2 0 1 2-3 4-3 8z" />
        </svg>
      </button>
      <button aria-label="Zoom" className="ml-1">
        <svg viewBox="0 0 17 16" className="h-4 w-[17px]">
          <circle cx="6" cy="8" r="5" fill="#e0e0e0" stroke="#707070" strokeWidth="1.300" />
          <path d="M12 3h5M14.500.5v5M12 7h5" stroke="#555" />
          <path d="M9.500 12l3 3.500" stroke="#a9743b" strokeWidth="2" />
        </svg>
      </button>
      <button aria-label="Ajuster" className="ml-1 flex items-center gap-[5px]">
        <svg viewBox="0 0 17 17" className="size-[17px]">
          <circle cx="7" cy="7" r="6.300" fill="#e8e8e8" stroke="#707070" strokeWidth="1.300" />
          <path d="M4 5h6v4H4z" fill="#fff" stroke="#707070" strokeWidth="1.300" />
          <path d="M11.500 12l4.500 4.500" stroke="#a9743b" strokeWidth="2" />
        </svg>
        <Caret />
      </button>
      <button aria-label="Affichage" className="flex items-center gap-1">
        <svg viewBox="0 0 16 14" className="h-3.5 w-4">
          <path d="M.7.7h14.600v10H.7z" fill="#f4f4f4" stroke="#707070" strokeWidth="1.300" />
          <path d="M2.500 2.500h11v6.500h-11z" fill="#b5b5b5" />
          <path d="M4 13h8" stroke="#707070" strokeWidth="1.500" />
        </svg>
        <Caret />
      </button>
      <button aria-label="Grille" className="flex items-center gap-[5px]">
        <svg viewBox="0 0 14 14" className="size-3.5" fill="none" stroke="#707070" strokeWidth="1.200">
          <path d="M.6.6h12.800v12.800H.6zM.6 5h12.800M.6 9h12.800M5 .6v12.800M9 .6v12.800" />
        </svg>
        <Caret />
      </button>
      <button aria-label="Fenêtres" className="flex items-center gap-[3px]">
        <svg viewBox="0 0 16 14" className="h-3.5 w-4" fill="none" stroke="#707070">
          <path d="M.6.6h14.800v12.800H.6zM8 .6v12.800M.6 7h14.800" strokeWidth="1.300" />
          <path d="M3 2.800h3v2H3zM10 2.800h3v2h-3zM3 9.200h3v2H3zM10 9.200h3v2h-3z" stroke="#aaa" />
        </svg>
        <Caret />
      </button>
    </div>
  );
}

/* ---------- timeline ---------- */

const playback = [
  ["Début", "M0 0h2v12H0zM12 0v12L3 6z"],
  ["Précédent", "M9 1v10L0 6zM10 4h2v4h-2z"],
  ["Lecture", "M1 0v12L12 6z"],
  ["Suivant", "M3 1v10l9-5zM0 4h2v4H0z"],
  ["Fin", "M0 0v12l9-6zM10 0h2v12h-2z"],
];

function Timeline() {
  return (
    <footer className="relative flex h-[50px] bg-[#f4f4f4]">
      <div className="flex w-[137px] shrink-0 gap-[11px] pl-[10px] pt-[22px]">
        {playback.map(([label, d]) => (
          <button key={label} aria-label={label} className="size-3.5">
            <svg viewBox="0 0 12 12" className="size-3.5" fill="#808080">
              <path d={d} />
            </svg>
          </button>
        ))}
      </div>
      <span className="mr-px mt-10 h-0.5 w-1 shrink-0 bg-[#c6c6c6]" />
      <ol className="flex h-[42px] overflow-hidden border-b-2 border-[#c6c6c6] pt-4">
        {timeline.map((feature, i) => (
          <li key={i} className="flex w-6 shrink-0 flex-col items-center gap-[3px]">
            <button aria-label={`${feature} ${i + 1}`} className="size-4">
              <ToolIcon name={feature} small />
            </button>
            <span className="h-[6px] w-0.5 bg-[#c6c6c6]" />
          </li>
        ))}
      </ol>
      <svg viewBox="0 0 12 32" className="absolute left-[1864px] top-[10px] h-8 w-3" aria-hidden="true">
        <path d="M0 0h11v5L7 10v22H5V10L0 5z" fill="#3c3c3c" />
      </svg>
      <div className="absolute right-[7px] top-px h-[5px] w-[190px] rounded-full bg-[#dcdcdc]" />
      <button aria-label="Paramètres" className="absolute right-[13px] top-[21px] text-[#808080]">
        <FaGear className="size-4" />
      </button>
    </footer>
  );
}

export default function App() {
  return (
    <div className="flex min-h-screen flex-col overflow-hidden bg-white font-['Noto_Sans',sans-serif]">
      <TitleBar />
      <QuickBar />
      <Ribbon />
      <main className="relative min-h-0 flex-1">
        <Aircraft />
        <Browser />
        <ViewCube />
        <NavBar />
        <Comments />
      </main>
      <Timeline />
    </div>
  );
}
